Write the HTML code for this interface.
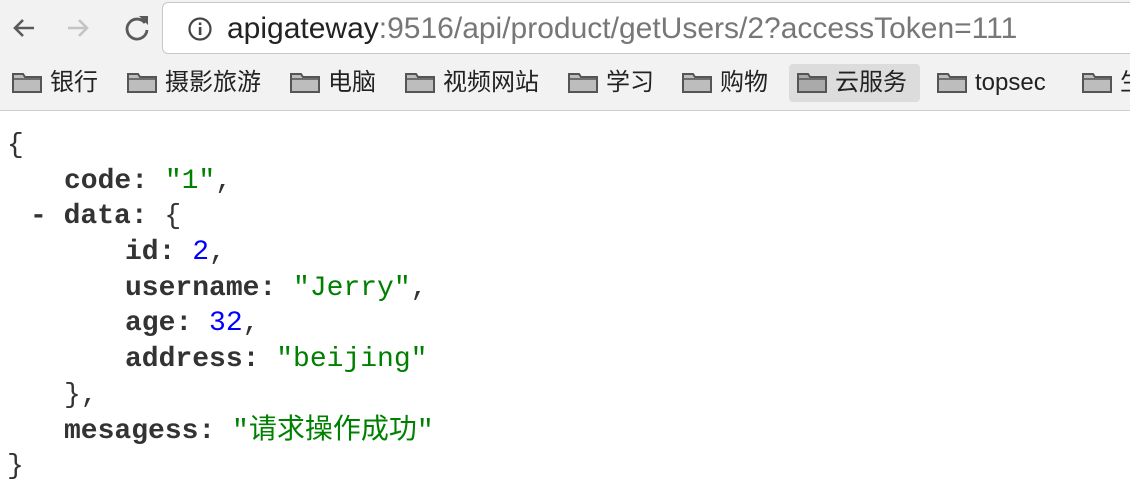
<!DOCTYPE html>
<html><head><meta charset="utf-8"><style>
*{margin:0;padding:0;box-sizing:border-box}
body{width:1130px;height:504px;overflow:hidden;background:#fff;font-family:"Liberation Sans","Noto Sans CJK SC",sans-serif;position:relative}
#top{position:absolute;left:0;top:0;width:1130px;height:111px;background:#f2f2f2;border-bottom:1px solid #cfcfcf}
#url{position:absolute;left:162px;top:2px;width:990px;height:52px;background:#fff;border:1px solid #c8c8c8;border-radius:6px}
#url .t{position:absolute;left:64px;top:9px;font-size:30px;color:#777;white-space:nowrap}
#url .t b{font-weight:normal;color:#222}
.bm{position:absolute;top:64px;height:38px;font-size:24px;color:#222;white-space:nowrap;line-height:38px;padding-left:8px;border-radius:4px}
.bm.h{background:#dcdcdc}
.f{display:inline-block;width:30px;height:22px;vertical-align:-3px;margin-right:8px}
#code{position:absolute;left:0;top:128px;font-family:"Liberation Mono","Noto Sans CJK SC",monospace;font-size:28px;color:#333}
#code div{height:35.7px;line-height:35.7px;white-space:pre}
.k{font-weight:bold;color:#333}.s{color:#008000}.n{color:#0000ff}
</style></head><body>
<div id="top">
<svg style="position:absolute;left:8px;top:12px" width="32" height="32" viewBox="0 0 32 32"><path d="M26 16H7M15 8l-8 8 8 8" fill="none" stroke="#5a5a5a" stroke-width="2.6"/></svg>
<svg style="position:absolute;left:62px;top:12px" width="32" height="32" viewBox="0 0 32 32"><path d="M6 16h19M17 8l8 8-8 8" fill="none" stroke="#c4c4c4" stroke-width="2.6"/></svg>
<svg style="position:absolute;left:120px;top:11px" width="34" height="34" viewBox="0 0 34 34"><path d="M25 12A10 10 0 1 0 27 19" fill="none" stroke="#5a5a5a" stroke-width="2.8"/><path d="M19 5h9v9z" fill="#5a5a5a"/></svg>
<div id="url">
<svg style="position:absolute;left:24px;top:13px" width="26" height="26" viewBox="0 0 26 26"><circle cx="13" cy="13" r="10.5" fill="none" stroke="#444" stroke-width="2.2"/><rect x="11.8" y="11" width="2.6" height="8" fill="#444"/><rect x="11.8" y="6.5" width="2.6" height="2.6" fill="#444"/></svg>
<div class="t"><b>apigateway</b>:9516/api/product/getUsers/2?accessToken=111</div>
</div>
<div class="bm" style="left:4px"><svg class="f" viewBox="0 0 30 22"><path d="M1 3h10l2 3h16v15H1z" fill="#bdbdbd" stroke="#555" stroke-width="2"/><path d="M1 8h28" stroke="#555" stroke-width="1.5"/></svg>银行</div>
<div class="bm" style="left:119px"><svg class="f" viewBox="0 0 30 22"><path d="M1 3h10l2 3h16v15H1z" fill="#bdbdbd" stroke="#555" stroke-width="2"/><path d="M1 8h28" stroke="#555" stroke-width="1.5"/></svg>摄影旅游</div>
<div class="bm" style="left:282px"><svg class="f" viewBox="0 0 30 22"><path d="M1 3h10l2 3h16v15H1z" fill="#bdbdbd" stroke="#555" stroke-width="2"/><path d="M1 8h28" stroke="#555" stroke-width="1.5"/></svg>电脑</div>
<div class="bm" style="left:397px"><svg class="f" viewBox="0 0 30 22"><path d="M1 3h10l2 3h16v15H1z" fill="#bdbdbd" stroke="#555" stroke-width="2"/><path d="M1 8h28" stroke="#555" stroke-width="1.5"/></svg>视频网站</div>
<div class="bm" style="left:560px"><svg class="f" viewBox="0 0 30 22"><path d="M1 3h10l2 3h16v15H1z" fill="#bdbdbd" stroke="#555" stroke-width="2"/><path d="M1 8h28" stroke="#555" stroke-width="1.5"/></svg>学习</div>
<div class="bm" style="left:674px"><svg class="f" viewBox="0 0 30 22"><path d="M1 3h10l2 3h16v15H1z" fill="#bdbdbd" stroke="#555" stroke-width="2"/><path d="M1 8h28" stroke="#555" stroke-width="1.5"/></svg>购物</div>
<div class="bm h" style="left:789px;width:131px"><svg class="f" viewBox="0 0 30 22"><path d="M1 3h10l2 3h16v15H1z" fill="#aaa" stroke="#555" stroke-width="2"/><path d="M1 8h28" stroke="#555" stroke-width="1.5"/></svg>云服务</div>
<div class="bm" style="left:929px"><svg class="f" viewBox="0 0 30 22"><path d="M1 3h10l2 3h16v15H1z" fill="#bdbdbd" stroke="#555" stroke-width="2"/><path d="M1 8h28" stroke="#555" stroke-width="1.5"/></svg>topsec</div>
<div class="bm" style="left:1074px"><svg class="f" viewBox="0 0 30 22"><path d="M1 3h10l2 3h16v15H1z" fill="#bdbdbd" stroke="#555" stroke-width="2"/><path d="M1 8h28" stroke="#555" stroke-width="1.5"/></svg>生活</div>
</div>
<div id="code"><div style="padding-left:7px">{</div><div style="padding-left:64px"><span class="k">code:</span> <span class="s">"1"</span>,</div><div style="padding-left:30px"><span class="k">- data:</span> {</div><div style="padding-left:125px"><span class="k">id:</span> <span class="n">2</span>,</div><div style="padding-left:125px"><span class="k">username:</span> <span class="s">"Jerry"</span>,</div><div style="padding-left:125px"><span class="k">age:</span> <span class="n">32</span>,</div><div style="padding-left:125px"><span class="k">address:</span> <span class="s">"beijing"</span></div><div style="padding-left:64px">},</div><div style="padding-left:64px"><span class="k">mesagess:</span> <span class="s">"请求操作成功"</span></div><div style="padding-left:7px">}</div></div>
</body></html>
